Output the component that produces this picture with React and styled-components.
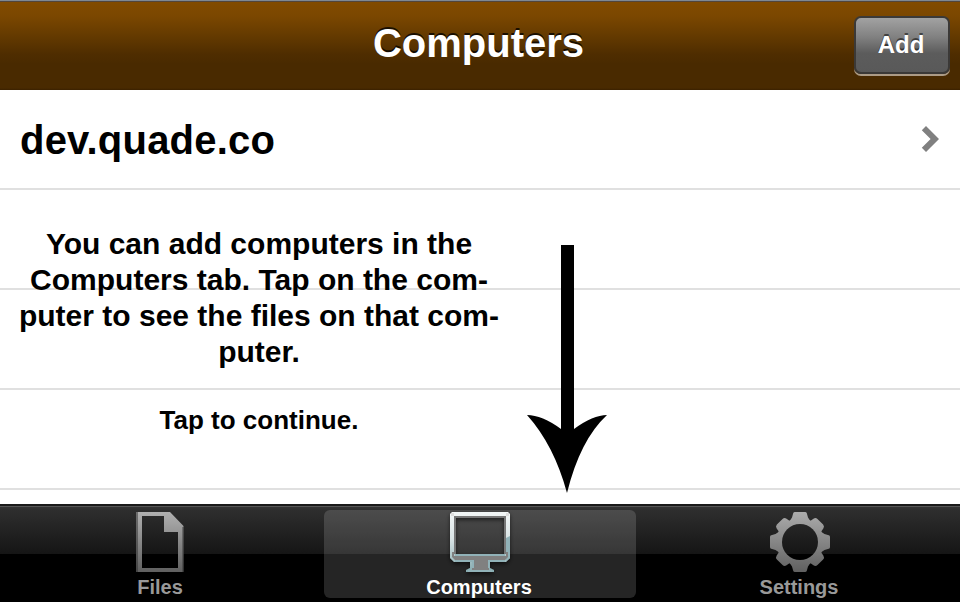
import React from "react";
import styled, { createGlobalStyle } from "styled-components";

const GlobalStyle = createGlobalStyle`
  * { box-sizing: border-box; }
  body { margin: 0; background: #fff; }
`;

const Screen = styled.div`
  width: 960px;
  height: 602px;
  overflow: hidden;
  display: flex;
  flex-direction: column;
  background: #fff;
  color: #000;
  font-family: "Liberation Sans", Arial, Helvetica, sans-serif;
  font-weight: 700;
`;

const NavBar = styled.header`
  flex: none;
  height: 90px;
  display: grid;
  grid-template-columns: 1fr auto 1fr;
  align-items: start;
  padding: 16px 10px 0;
  background: linear-gradient(#7f8893 0 1px, #53463b 1px 2px, #824b00 2px, #7b4700 16px, #643a00 36px, #4f2d00 54px, #492a00 64px, #492a00 88px, #3a2100 90px);
`;

const Title = styled.h1`
  grid-column: 2;
  margin: 4px 0 0 -3px;
  font-size: 40px;
  line-height: 46px;
  color: #fff;
  text-shadow: 0 -2px 0 rgba(0, 0, 0, 0.75);
`;

const AddButton = styled.button`
  justify-self: end;
  width: 96px;
  height: 58px;
  padding: 0 2px 0 0;
  border: 2px solid #3b3937;
  border-radius: 7px;
  background: linear-gradient(#a2a2a2, #818181 35%, #5c5c5c 65%, #595959);
  box-shadow: 0 2px 0 #ac9b86;
  color: #fff;
  font: inherit;
  font-size: 24px;
  line-height: 28px;
  text-shadow: 0 -2px 0 rgba(0, 0, 0, 0.5);
`;

const Content = styled.main`
  position: relative;
  flex: none;
  height: 414px;
  overflow: hidden;
`;

const Row = styled.div`
  height: 100px;
  display: flex;
  align-items: center;
  justify-content: space-between;
  padding: 0 20px;
  border-bottom: 2px solid #e0e0e0;
`;

const HostName = styled.span`
  padding-top: 2px;
  font-size: 40px;
  line-height: 46px;
  letter-spacing: 0.2px;
`;

const Hint = styled.div`
  position: absolute;
  top: 136px;
  left: 9px;
  width: 500px;
  text-align: center;
`;

const HintText = styled.p`
  margin: 0;
  font-size: 30px;
  line-height: 36px;
`;

const Line = styled.span`
  display: block;
  white-space: nowrap;
`;

const HintAction = styled.p`
  margin: 35px 0 0;
  font-size: 26px;
  line-height: 30px;
`;

const Arrow = styled.svg`
  position: absolute;
  left: 527px;
  top: 155px;
`;

const TabBar = styled.nav`
  flex: none;
  height: 98px;
  display: grid;
  grid-template-columns: repeat(3, 312px);
  column-gap: 8px;
  justify-content: center;
  padding-top: 6px;
  background: linear-gradient(#1a1a1a 0 2px, #555 2px 3px, #343434 3px, #2e2e2e 6px, #151515 50px, #000 50px);
`;

const Tab = styled.button`
  height: 88px;
  display: flex;
  flex-direction: column;
  align-items: center;
  padding: 2px 0 0;
  border: 0;
  border-radius: 6px;
  background: ${(p) => (p.$active ? "rgba(255,255,255,.145)" : "transparent")};
  color: ${(p) => (p.$active ? "#fff" : "#999")};
  font: inherit;
  font-size: 20px;
  line-height: 23px;
  svg { display: block; flex: none; overflow: visible; }
`;

const TabLabel = styled.span`
  margin-top: 4px;
  margin-left: ${(p) => p.$shift || 0}px;
`;

const FileIcon = () => (
  <svg width="60" height="60" viewBox="0 0 60 60">
    <defs>
      <linearGradient id="file" x2="0" y2="1">
        <stop stopColor="#b0b0b0" />
        <stop offset="1" stopColor="#606060" />
      </linearGradient>
    </defs>
    <path fill="url(#file)" fillRule="evenodd" d="M6 0H40L53.5 14V60H6ZM12 4V56H48V20H34V4Z" />
    <path d="M7 0V60" stroke="#2c2c2c" strokeOpacity=".5" strokeWidth="2" />
    <path d="M53 15V60" stroke="#2c2c2c" strokeOpacity=".4" strokeWidth="2" />
  </svg>
);

const ComputerIcon = () => (
  <svg width="60" height="60" viewBox="0 0 60 60">
    <defs>
      <linearGradient id="frame" x2="0" y2="1">
        <stop stopColor="#f2f6f6" />
        <stop offset=".45" stopColor="#d9e3e4" />
        <stop offset="1" stopColor="#86abb0" />
      </linearGradient>
      <filter id="soft" x="-20%" y="-20%" width="140%" height="150%">
        <feDropShadow dx="0" dy="2" stdDeviation="2" floodOpacity=".6" />
      </filter>
    </defs>
    <g filter="url(#soft)">
      <path fill="url(#frame)" fillRule="evenodd" d="M2 0H58L60 2V46L56 50H40V56L44 58V60H16V58L20 56V50H4L0 46V2ZM6 6V42H54V6Z" />
    </g>
    <path fill="#91b2b8" d="M56 26L60 24V46L56 49Z" />
    <path fill="none" stroke="#777" strokeWidth="2" d="M5 42V5H55V42" />
    <path fill="#808080" d="M2 40H4V44H56V40H58V45L55 48H39V58H22V48H5L2 45Z" />
    <path fill="none" stroke="#91b2b8" strokeWidth="2" d="M5 43H55M5 49H23V56M39 56V49H55M18 59H42" />
    <path fill="#ddd" d="M1 1H4V4H1ZM56 1H59V4H56Z" />
  </svg>
);

const GearIcon = () => (
  <svg width="60" height="60" viewBox="0 0 60 60">
    <defs>
      <linearGradient id="gear" gradientUnits="userSpaceOnUse" x1="0" y1="0" x2="0" y2="60">
        <stop stopColor="#acacac" />
        <stop offset="1" stopColor="#606060" />
      </linearGradient>
      <mask id="cog">
        <circle cx="30" cy="30" r="23.5" fill="#fff" />
        {[0, 90, 180, 270].map((a) => (
          <path key={a} fill="#fff" d="M19 10L22 5.5L23.2 1.2Q23.5 0 25 0H35Q36.5 0 36.8 1.2L38 5.5L41 10Z" transform={`rotate(${a} 30 30)`} />
        ))}
        {[45, 135, 225, 315].map((a) => (
          <path key={a} fill="#fff" d="M19.5 11L22.5 7L23 4Q23.5 1.5 26 1.3H34Q36.5 1.5 37 4L37.5 7L40.5 11Z" transform={`rotate(${a} 30 30)`} />
        ))}
        <circle cx="30" cy="30" r="18" fill="#000" />
      </mask>
    </defs>
    <rect width="60" height="60" fill="url(#gear)" mask="url(#cog)" />
  </svg>
);

const Chevron = () => (
  <svg width="20" height="28" viewBox="0 0 20 28">
    <path d="M1.8 5.2L6 1L19 14L6 27L1.8 22.8L10.6 14Z" fill="#808080" />
  </svg>
);

export default function App() {
  return (
    <Screen>
      <GlobalStyle />
      <NavBar>
        <Title>Computers</Title>
        <AddButton>Add</AddButton>
      </NavBar>
      <Content>
        <Row>
          <HostName>dev.quade.co</HostName>
          <Chevron />
        </Row>
        <Row />
        <Row />
        <Row />
        <Hint>
          <HintText>
            <Line>You can add computers in the</Line>
            <Line>Computers tab. Tap on the com-</Line>
            <Line>puter to see the files on that com-</Line>
            <Line>puter.</Line>
          </HintText>
          <HintAction>Tap to continue.</HintAction>
        </Hint>
        <Arrow width="80" height="248" viewBox="0 0 80 248">
          <path d="M34 0H47V184Q66 170 80 170Q53 195 40 248Q27 200 0 170Q15 170 34 184Z" />
        </Arrow>
      </Content>
      <TabBar>
        <Tab><FileIcon /><TabLabel>Files</TabLabel></Tab>
        <Tab $active><ComputerIcon /><TabLabel $shift={-2}>Computers</TabLabel></Tab>
        <Tab><GearIcon /><TabLabel $shift={-2}>Settings</TabLabel></Tab>
      </TabBar>
    </Screen>
  );
}
